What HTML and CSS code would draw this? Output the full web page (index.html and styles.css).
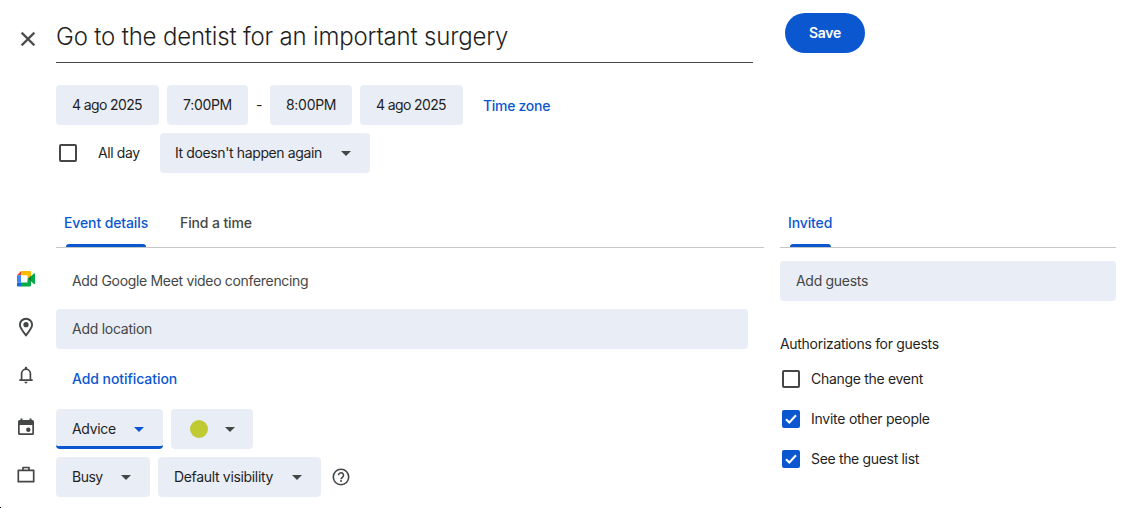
FILE: index.html
```
<!DOCTYPE html>
<html lang="en">
<head>
<meta charset="utf-8">
<title>Event editor</title>
<link rel="stylesheet" href="styles.css">
</head>
<body>
<div class="page">
  <header class="header">
    <svg class="close" width="24" height="24" viewBox="0 0 24 24"><path fill="#444746" stroke="#444746" stroke-width=".3" d="M19 6.410L17.590 5 12 10.590 6.410 5 5 6.410 10.590 12 5 17.590 6.410 19 12 13.410 17.590 19 19 17.590 13.410 12z"/></svg>
    <div class="title"><span>Go to the dentist for an important surgery</span></div>
    <button class="save">Save</button>
  </header>

  <section class="schedule">
    <div class="row">
      <div class="chip date">4 ago 2025</div>
      <div class="chip start">7:00PM</div>
      <span class="dash">-</span>
      <div class="chip end">8:00PM</div>
      <div class="chip date">4 ago 2025</div>
      <a class="link zone">Time zone</a>
    </div>
    <div class="row">
      <span class="box allday-box"></span>
      <span class="allday">All day</span>
      <div class="chip repeat"><span>It doesn't happen again</span><i class="arrow"></i></div>
    </div>
  </section>

  <main class="columns">
    <section class="details">
      <nav class="tabs">
        <div class="tab active event"><span>Event details</span></div>
        <div class="tab find"><span>Find a time</span></div>
      </nav>
      <div class="line meet">
        <svg class="icon" width="20" height="20" viewBox="0 0 20 20">
          <path fill="#ea4335" d="M1 6.200L5 2v4.200z"/>
          <path fill="#4285f4" d="M1 6.200h4v7.300H1z"/>
          <path fill="#1967d2" d="M1 13.500h4v4H2.200A1.200 1.200 0 0 1 1 16.300z"/>
          <path fill="#fbbc04" d="M5 2h8.800a1.200 1.200 0 0 1 1.200 1.200V7l-3.500 3V6.200H5z"/>
          <path fill="#00ac47" d="M5 13.500h6.500V10l3.500 3v3.300a1.200 1.200 0 0 1-1.200 1.200H5zM15 7l3-2.500c.5-.4 1-.1 1 .4v9.700c0 .5-.5.800-1 .4L15 12.500z"/>
          <path fill="#00832d" d="M11.500 9.900L15 6.700v6.300z"/>
        </svg>
        <span class="muted meet-text">Add Google Meet video conferencing</span>
      </div>
      <div class="line location">
        <svg class="icon" width="20" height="20" viewBox="0 0 20 20"><path fill="none" stroke="#444746" stroke-width="1.900" d="M10 18.300C6 13.500 3.900 10.600 3.900 7.800a6.100 6.100 0 0 1 12.200 0c0 2.800-2.100 5.700-6.100 10.500z"/><circle cx="10" cy="7.700" r="2.600" fill="#444746"/></svg>
        <div class="chip wide muted"><span>Add location</span></div>
      </div>
      <div class="line notify">
        <svg class="icon" width="20" height="20" viewBox="0 0 20 20"><path fill="none" stroke="#444746" stroke-width="1.700" d="M5.600 15V8.600a4.400 4.400 0 0 1 8.800 0V15M3.300 15.200h13.400"/><path fill="#444746" d="M8.800 4V3a1.200 1.200 0 0 1 2.400 0v1zM8.400 16.800h3.200a1.600 1.600 0 0 1-3.200 0z"/></svg>
        <a class="link notification">Add notification</a>
      </div>
      <div class="line">
        <svg class="icon" width="20" height="20" viewBox="0 0 20 20"><path fill="#444746" fill-rule="evenodd" d="M4.500 1.500h2V3h7V1.500h2V3h.9A1.600 1.600 0 0 1 18 4.600v11.800a1.600 1.600 0 0 1-1.600 1.600H3.600A1.600 1.600 0 0 1 2 16.400V4.600A1.600 1.600 0 0 1 3.600 3h.9zM3.700 8v8.300h12.600V8z"/><circle cx="12.300" cy="12.700" r="2.200" fill="#444746"/></svg>
        <div class="chip advice"><span>Advice</span><i class="arrow"></i></div>
        <div class="chip color"><i class="dot"></i><i class="arrow"></i></div>
      </div>
      <div class="line">
        <svg class="icon" width="20" height="20" viewBox="0 0 20 20"><path fill="none" stroke="#444746" stroke-width="1.700" stroke-linejoin="round" d="M2.300 5.400h15.400v11.300H2.300zM7 5.400V2.500h6v2.900"/></svg>
        <div class="chip busy"><span>Busy</span><i class="arrow"></i></div>
        <div class="chip visibility"><span>Default visibility</span><i class="arrow"></i></div>
        <svg class="help" width="18" height="18" viewBox="0 0 18 18"><circle cx="9" cy="9" r="7.700" fill="none" stroke="#444746" stroke-width="1.600"/><path fill="none" stroke="#444746" stroke-width="1.600" d="M6.500 7.200a2.500 2.500 0 1 1 3.900 2.100c-.9.600-1.400 1-1.400 2"/><circle cx="9" cy="13" r="1" fill="#444746"/></svg>
      </div>
    </section>

    <aside class="guests">
      <nav class="tabs">
        <div class="tab active invited"><span>Invited</span></div>
      </nav>
      <div class="chip add muted"><span>Add guests</span></div>
      <h2 class="heading"><span>Authorizations for guests</span></h2>
      <label class="perm"><span class="box"></span><span>Change the event</span></label>
      <label class="perm"><span class="box checked"><svg width="18" height="18" viewBox="0 0 18 18"><path fill="none" stroke="#fff" stroke-width="2" d="M4 9.300l3.300 3.200L14 5.300"/></svg></span><span class="invite">Invite other people</span></label>
      <label class="perm"><span class="box checked"><svg width="18" height="18" viewBox="0 0 18 18"><path fill="none" stroke="#fff" stroke-width="2" d="M4 9.300l3.300 3.200L14 5.300"/></svg></span><span class="list">See the guest list</span></label>
    </aside>
  </main>
  <i class="corner"></i>
</div>
</body>
</html>
```
FILE: styles.css
```
* { box-sizing: border-box; }
body {
  margin: 0;
  background: #fff;
  color: #1f1f1f;
  font: 400 14px/20px Inter, "Open Sans", sans-serif;
  letter-spacing: -0.3px;
  white-space: nowrap;
}
.page { position: relative; width: 1132px; height: 508px; overflow: hidden; }
.header { display: flex; align-items: flex-start; height: 85px; }
.close { margin: 27px 16px 0; flex: none; }
.title {
  width: 697px;
  height: 63px;
  padding-top: 21px;
  border-bottom: 1px solid #444746;
  font-size: 24px;
  font-weight: 360;
  line-height: 32px;
  letter-spacing: -0.18px;
}
.save {
  width: 80px;
  height: 40px;
  margin: 13px 0 0 32px;
  padding: 0;
  border: 0;
  border-radius: 20px;
  background: #0b57d0;
  color: #fff;
  font: 600 14px/20px Inter, sans-serif;
  letter-spacing: -0.25px;
}
.schedule { display: flex; flex-direction: column; gap: 8px; padding-left: 56px; }
.row { display: flex; align-items: center; height: 40px; }
.chip {
  display: flex;
  align-items: center;
  flex: none;
  height: 40px;
  padding-left: 16px;
  border-radius: 4px;
  background: #e9edf6;
}
.date { width: 103px; letter-spacing: -0.62px; }
.start { width: 81px; margin-left: 8px; }
.dash { width: 22px; text-align: center; }
.end { width: 82px; margin-right: 8px; }
.link { color: #0b57d0; font-weight: 500; }
.zone { margin: 2px 0 0 20px; }
.box { width: 18px; height: 18px; flex: none; border: 2px solid #444746; border-radius: 2px; }
.checked { border: 0; background: #0b57d0; }
.checked svg { display: block; }
.allday-box { margin-left: 3px; }
.allday { width: 62px; margin-left: 21px; letter-spacing: -0.4px; }
.arrow { border: 5px solid transparent; border-top-color: #444746; border-bottom: 0; }
.chip .arrow { margin-left: auto; }
.repeat { width: 210px; padding: 0 19px 0 15px; letter-spacing: -0.38px; }
.columns { display: flex; gap: 16px; padding-top: 26px; }
.details { width: 764px; }
.tabs { display: flex; height: 49px; border-bottom: 1px solid #c4c7c5; }
.details .tabs { margin-left: 56px; }
.tab { position: relative; padding-top: 14px; font-weight: 500; color: #444746; letter-spacing: -0.12px; }
.tab.active { color: #0b57d0; }
.tab.active::after {
  content: "";
  position: absolute;
  left: 10px;
  right: 10px;
  bottom: 0;
  height: 3px;
  border-radius: 3px 3px 0 0;
  background: #0b57d0;
}
.event { width: 100px; padding-left: 8px; }
.find { padding-left: 24px; }
.line { display: flex; height: 40px; margin-bottom: 8px; align-items: center; }
.icon { width: 20px; height: 20px; flex: none; margin: -4px 20px 0 16px; }
.muted { color: #444746; }
.meet { margin-top: 13px; }
.meet-text { margin-left: 16px; letter-spacing: -0.32px; }
.wide { width: 692px; letter-spacing: -0.26px; }
.notify { height: 44px; }
.notify .icon { margin-top: -8px; }
.notification { margin-left: 16px; letter-spacing: -0.07px; }
.advice { width: 107px; padding-right: 19px; border-bottom: 3px solid #0b57d0; padding-top: 3px; }
.advice .arrow { border-top-color: #0b57d0; }
.color { width: 82px; margin-left: 8px; padding: 0 18px 0 19px; }
.dot { width: 18px; height: 18px; border-radius: 50%; background: #c0ca33; }
.busy { width: 94px; padding-right: 19px; letter-spacing: -0.5px; }
.visibility { width: 163px; margin-left: 8px; padding-right: 19px; letter-spacing: -0.33px; }
.help { margin-left: 11px; }
.guests { width: 336px; }
.invited { width: 61px; padding-left: 8px; }
.add { margin-top: 13px; }
.heading { margin: 33px 0 5px; font-size: 14px; font-weight: 400; line-height: 20px; }
.perm { display: flex; align-items: center; gap: 11px; height: 40px; padding-left: 2px; }
.invite { letter-spacing: -0.25px; }
.list { letter-spacing: -0.33px; }
.corner { position: absolute; left: 0; bottom: 0; width: 1px; height: 1px; background: #000; }
```
